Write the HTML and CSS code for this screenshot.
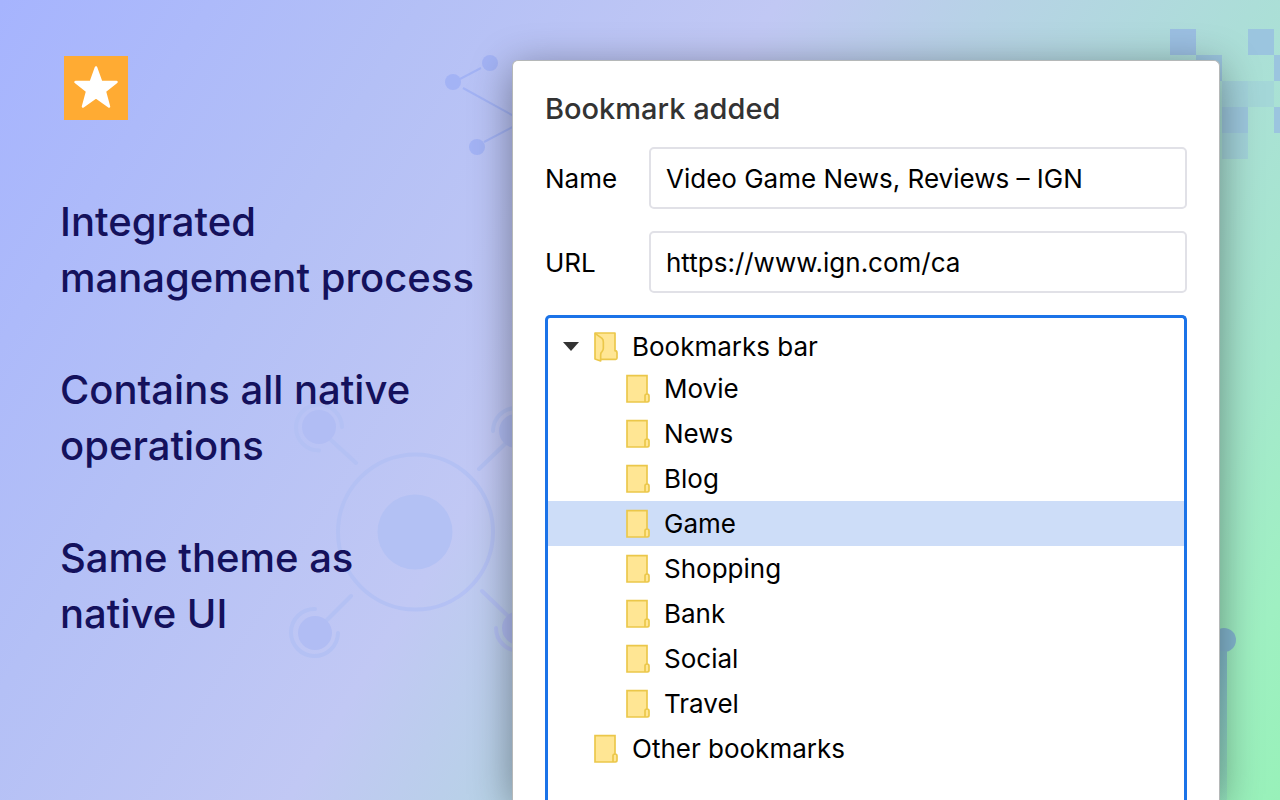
FILE: index.html
```html
<!DOCTYPE html>
<html lang="en">
<head>
<meta charset="utf-8">
<meta name="viewport" content="width=device-width, initial-scale=1">
<title>Bookmark added</title>
<link rel="stylesheet" href="styles.css">
</head>
<body>
<svg class="defs" width="0" height="0" aria-hidden="true">
  <symbol id="folder" viewBox="0 0 72 90">
    <path d="M3 5H63V60Q69 60 69 66V79Q69 84 64 84H3Z" fill="#ffe694" stroke="#ebc74a" stroke-width="5"/>
    <path d="M57 84V65Q57 60 63 60" fill="none" stroke="#ebc74a" stroke-width="5"/>
  </symbol>
  <symbol id="folder-open" viewBox="0 0 72 90">
    <path d="M3 3H63V56Q69 56 69 63V78Q69 82 65 82H20V87L3 81Z" fill="#ffe694" stroke="#ebc74a" stroke-width="5" stroke-linejoin="round"/>
    <path d="M3 4L24 19Q28 23 28 30V49Q28 55 24 59Q20 62 20 68V84" fill="none" stroke="#ebc74a" stroke-width="5"/>
  </symbol>
</svg>

<div class="page">
  <svg class="scene" viewBox="0 0 1280 800" preserveAspectRatio="xMidYMid slice" aria-hidden="true">
    <g fill="#a3b3f5" stroke="#a3b3f5" stroke-width="2">
      <g stroke="none"><circle cx="490" cy="63" r="8"/><circle cx="453" cy="82" r="8"/><circle cx="477" cy="147" r="8"/></g>
      <path d="M460 79L481 68M463 88L530 125M484 142L530 118" fill="none"/>
    </g>
    <g fill="none" stroke="#b4c1f4" stroke-width="4" stroke-linecap="round">
      <circle cx="415.500" cy="532" r="77.500"/>
      <path d="M331 440L356 463M479 469L505 444M351 596L327 620M482 591L507 615"/>
      <path d="M342 427A23 23 0 1 0 319 450.500M493 431A23 23 0 0 1 516 408M315 609A23.500 23.500 0 1 0 338 633M496 628A23 23 0 0 0 519 651"/>
    </g>
    <g fill="#b1bdf4"><circle cx="319" cy="427" r="17"/><circle cx="516" cy="431" r="17"/><circle cx="315" cy="633" r="17"/><circle cx="519" cy="628" r="17"/></g>
    <circle cx="415" cy="532" r="37.500" fill="#b3c1f4"/>
    <g fill="#9bc5df">
      <path d="M1170 29h26v26h-26z" fill="#9bbfe2"/>
      <path d="M1248 29h26v26h-26zM1196 55h26v26h-26zM1274 55h26v26h-26zM1274 107h26v26h-26z"/>
      <path d="M1222 107h26v26h-26z" opacity=".9"/>
      <path d="M1222 81h26v26h-26zM1222 133h26v26h-26z" opacity=".5"/>
      <path d="M1248 81h26v26h-26z" opacity=".35"/>
    </g>
    <linearGradient id="stem" x1="0" y1="0" x2="0" y2="1"><stop stop-color="#85bdce"/><stop offset="1" stop-color="#85bdce" stop-opacity=".2"/></linearGradient>
    <circle cx="1224" cy="640" r="12" fill="#85b9d2"/>
    <path d="M1219 651h8v149h-8z" fill="url(#stem)"/>
  </svg>

  <section class="intro">
    <svg class="logo" viewBox="0 0 64 64" role="img" aria-label="Star">
      <path d="M0 0H64V64H0Z" fill="#ffab33"/>
      <path d="M32 11.500L37.200 26H52.500L40.800 35.200L45 50.500L32 41.200L19 50.500L23.200 35.200L11.500 26H26.800Z" fill="#fff" stroke="#fff" stroke-width="2.500" stroke-linejoin="round"/>
    </svg>
    <p>Integrated<br>management process</p>
    <p>Contains all native<br>operations</p>
    <p>Same theme as<br>native UI</p>
  </section>

  <main class="panel">
    <h1>Bookmark added</h1>
    <form class="form">
      <label for="name">Name</label>
      <input id="name" type="text" value="Video Game News, Reviews – IGN">
      <label for="url">URL</label>
      <input id="url" type="text" value="https://www.ign.com/ca">
    </form>
    <div class="tree">
      <div class="root">
        <button class="toggle" type="button" aria-label="Collapse" aria-expanded="true"><svg viewBox="0 0 16 10"><path d="M0 0H16L8 9Z" fill="#333"/></svg></button>
        <button class="row" type="button"><svg class="icon"><use href="#folder-open"/></svg>Bookmarks bar</button>
      </div>
      <ul class="children">
        <li><button class="row" type="button"><svg class="icon"><use href="#folder"/></svg>Movie</button></li>
        <li><button class="row" type="button"><svg class="icon"><use href="#folder"/></svg>News</button></li>
        <li><button class="row" type="button"><svg class="icon"><use href="#folder"/></svg>Blog</button></li>
        <li><button class="row selected" type="button"><svg class="icon"><use href="#folder"/></svg>Game</button></li>
        <li><button class="row" type="button"><svg class="icon"><use href="#folder"/></svg>Shopping</button></li>
        <li><button class="row" type="button"><svg class="icon"><use href="#folder"/></svg>Bank</button></li>
        <li><button class="row" type="button"><svg class="icon"><use href="#folder"/></svg>Social</button></li>
        <li><button class="row" type="button"><svg class="icon"><use href="#folder"/></svg>Travel</button></li>
      </ul>
      <button class="row other" type="button"><svg class="icon"><use href="#folder"/></svg>Other bookmarks</button>
    </div>
  </main>
</div>
</body>
</html>
```
FILE: styles.css
```css
* { box-sizing: border-box; }
body {
  margin: 0;
  font-family: Inter, "Noto Sans", sans-serif;
  color: #000;
}
.defs { position: absolute; }
.page {
  position: relative;
  display: grid;
  grid-template-columns: 452px 1fr;
  min-height: 100vh;
  padding: 0 60px;
  overflow: hidden;
  background: linear-gradient(121.5deg, #a6b4fe 0%, #b4c0f6 24%, #c1c8f4 44%, #b7d2e6 56%, #acded8 71%, #a5e8cd 84%, #9ff0c2 93%, #98f1b9 100%);
}
.scene {
  position: absolute;
  inset: 0;
  width: 100%;
  height: 100%;
}
.intro {
  position: relative;
  padding-top: 56px;
  color: #14115c;
  font-size: 40px;
  font-weight: 500;
  line-height: 56px;
  white-space: nowrap;
}
.logo {
  display: block;
  width: 64px;
  height: 64px;
  margin: 0 0 74px 4px;
}
.intro p { margin: 0 0 56px; }
.panel {
  position: relative;
  display: flex;
  flex-direction: column;
  margin-top: 60px;
  padding: 30px 32px 0;
  background: #fff;
  border: 1px solid #b5b8b8;
  border-bottom: 0;
  border-radius: 6px 6px 0 0;
  box-shadow: 0 8px 42px rgba(0, 0, 0, .4);
}
h1 {
  margin: 0 0 20px;
  color: #333;
  font-size: 29px;
  font-weight: 500;
  line-height: 36px;
}
.form {
  display: grid;
  grid-template-columns: 82px 1fr;
  gap: 22px;
  align-items: center;
  font-size: 26px;
}
.form input {
  width: 100%;
  height: 62px;
  padding: 0 15px;
  border: 2px solid #e1e1e7;
  border-radius: 5px;
  background: #fff;
  color: #000;
  font: inherit;
  outline: 0;
}
.tree {
  flex: 1;
  margin-top: 22px;
  padding-top: 6px;
  border: 3px solid #1b73e8;
  border-bottom: 0;
  border-radius: 5px 5px 0 0;
}
button {
  padding: 0;
  border: 0;
  background: none;
  color: inherit;
  font: inherit;
  cursor: pointer;
}
.root {
  display: flex;
  height: 42px;
}
.toggle {
  display: flex;
  flex: none;
  align-items: center;
  justify-content: center;
  width: 46px;
  padding-top: 4px;
}
.toggle svg { width: 16px; height: 10px; }
.children {
  margin: 0;
  padding: 0;
  list-style: none;
}
.row {
  display: flex;
  align-items: center;
  gap: 14px;
  width: 100%;
  height: 45px;
  font-size: 26px;
  text-align: left;
}
.root .row { height: 45px; }
.children .row { padding-left: 78px; }
.other { padding-left: 46px; }
.selected { background: #cdddf8; }
.icon {
  flex: none;
  width: 24px;
  height: 30px;
}
```
